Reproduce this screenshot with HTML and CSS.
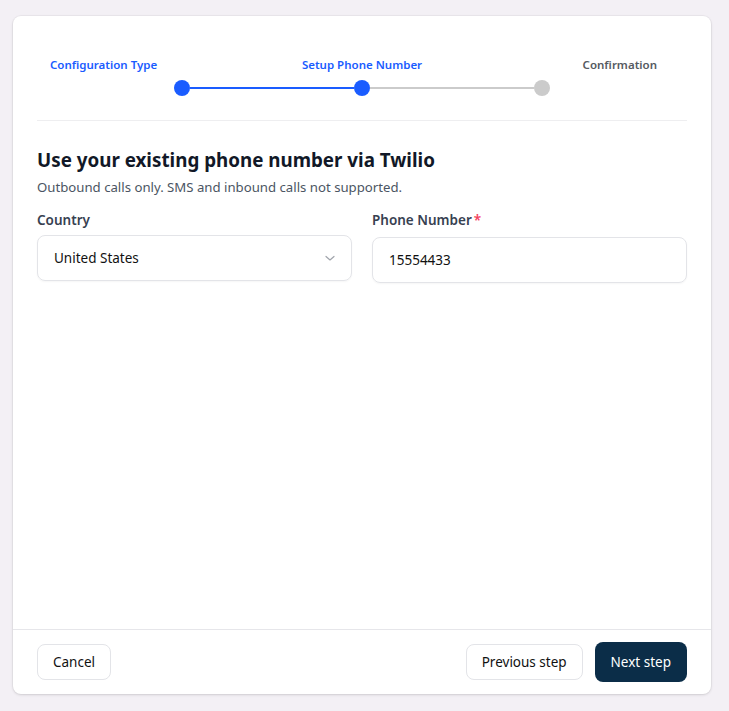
FILE: index.html
```html
<!DOCTYPE html>
<html lang="en">
<head>
<meta charset="utf-8">
<title>Setup Phone Number</title>
<link rel="stylesheet" href="styles.css">
</head>
<body>
<div class="card">
  <div class="content">
    <div class="stepper">
      <div class="step-labels">
        <span class="step-label done first">Configuration Type</span>
        <span class="step-label done middle">Setup Phone Number</span>
        <span class="step-label last">Confirmation</span>
      </div>
      <div class="step-track">
        <span class="dot active"></span>
        <span class="line active"></span>
        <span class="dot active"></span>
        <span class="line"></span>
        <span class="dot"></span>
      </div>
    </div>
    <h1 class="title">Use your existing phone number via Twilio</h1>
    <p class="subtitle">Outbound calls only. SMS and inbound calls not supported.</p>
    <div class="fields">
      <div class="field">
        <label class="label">Country</label>
        <div class="select">
          <span>United States</span>
          <svg class="chevron" width="12" height="12" viewBox="0 0 12 12"><path d="M2 4.5 L6 8 L10 4.5" fill="none" stroke="#a0a4ab" stroke-width="1.2" stroke-linecap="round" stroke-linejoin="round"/></svg>
        </div>
      </div>
      <div class="field">
        <label class="label">Phone Number<span class="req">*</span></label>
        <div class="input input-offset">15554433</div>
      </div>
    </div>
  </div>
  <div class="footer">
    <button class="btn btn-light">Cancel</button>
    <div class="footer-right">
      <button class="btn btn-light">Previous step</button>
      <button class="btn btn-dark">Next step</button>
    </div>
  </div>
</div>
</body>
</html>
```

FILE: styles.css
```css
* { box-sizing: border-box; }
html, body { margin: 0; padding: 0; }
body {
  background: #f3f0f5;
  font-family: "Noto Sans", "Open Sans", sans-serif;
  padding: 16px 18px 17px 13px;
  height: 711px;
}
.card {
  width: 698px;
  height: 678px;
  background: #fff;
  border-radius: 8px;
  box-shadow: 0 1px 3px rgba(0,0,0,0.12), 0 0 0 1px rgba(0,0,0,0.03);
  display: flex;
  flex-direction: column;
}
.content {
  flex: 1;
  padding: 41px 24px 0 24px;
}
.stepper {
  border-bottom: 1px solid #eeeef0;
  padding-bottom: 24px;
}
.step-labels {
  display: grid;
  grid-template-columns: 1fr 1fr 1fr;
  height: 16px;
  align-items: center;
}
.step-label {
  font-size: 11.5px;
  font-weight: 600;
  color: #555a61;
  line-height: 16px;
  white-space: nowrap;
}
.step-label.done { color: #1a5cff; }
.first { padding-left: 13px; }
.middle { justify-self: center; }
.last { justify-self: end; padding-right: 30px; }
.step-track {
  margin: 7px auto 0;
  width: 376px;
  display: flex;
  align-items: center;
}
.dot {
  width: 16px;
  height: 16px;
  border-radius: 50%;
  background: #cbcbcb;
  flex: none;
}
.dot.active { background: #1a5cff; }
.line {
  flex: 1;
  height: 2px;
  background: #cbcbcb;
}
.line.active { background: #1a5cff; }
.title {
  margin: 26px 0 0;
  font-size: 18.8px;
  font-weight: 700;
  line-height: 26px;
  color: #111827;
}
.subtitle {
  margin: 5px 0 0;
  font-size: 13.2px;
  line-height: 18px;
  color: #4b5563;
}
.fields {
  margin-top: 14px;
  display: grid;
  grid-template-columns: 1fr 1fr;
  gap: 20px;
}
.label {
  display: block;
  font-size: 13.5px;
  font-weight: 600;
  color: #374151;
  line-height: 20px;
}
.req { color: #f43f5e; margin-left: 2px; }
.select, .input {
  margin-top: 5px;
  height: 46px;
  border: 1px solid #e3e4e8;
  border-radius: 8px;
  display: flex;
  align-items: center;
  justify-content: space-between;
  padding: 0 15px 0 16px;
  font-size: 13.5px;
  color: #111;
  box-shadow: 0 1px 2px rgba(0,0,0,0.04);
}
.input-offset { margin-top: 7px; }
.chevron { display: block; }
.footer {
  border-top: 1px solid #e6e6ea;
  padding: 12px 24px 12px;
  display: flex;
  justify-content: space-between;
  align-items: center;
}
.footer-right { display: flex; gap: 12px; align-items: center; }
.btn {
  font-family: inherit;
  font-size: 13.5px;
  border-radius: 8px;
  cursor: pointer;
}
.btn-light {
  height: 36px;
  background: #fff;
  border: 1px solid #e3e4e8;
  color: #111;
  padding: 0 15px;
}
.btn-dark {
  height: 40px;
  background: #0b2d48;
  border: none;
  color: #fff;
  padding: 0 16px;
}
```
